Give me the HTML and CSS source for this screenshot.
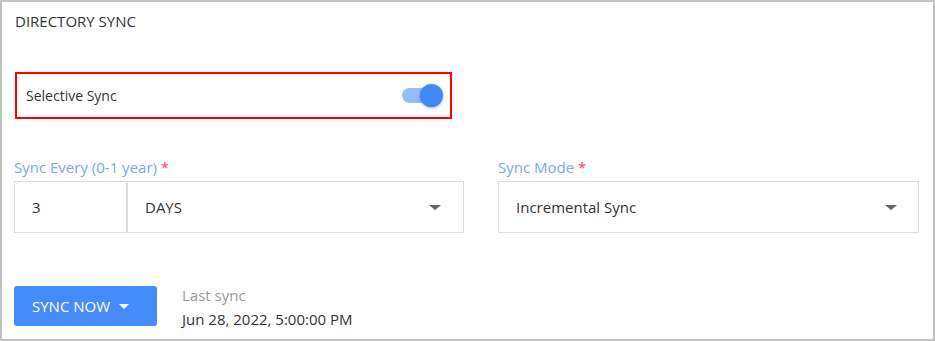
FILE: index.html
```html
<!DOCTYPE html>
<html lang="en">
<head>
    <meta charset="UTF-8" />
    <meta name="viewport" content="width=device-width, initial-scale=1.0" />
    <title>Directory Sync</title>
    <link rel="stylesheet" href="styles.css">
</head>
<body>
    <div class="panel">
        <h2 class="title">DIRECTORY SYNC</h2>

        <div class="selective">
            <span>Selective Sync</span>
            <span class="toggle"><span class="thumb"></span></span>
        </div>

        <div class="fields">
            <div class="field">
                <label>Sync Every (0-1 year) <span class="req">*</span></label>
                <div class="box">
                    <div class="num">3</div>
                    <div class="select">
                        <span>DAYS</span>
                        <span class="caret"></span>
                    </div>
                </div>
            </div>
            <div class="field">
                <label>Sync Mode <span class="req">*</span></label>
                <div class="box">
                    <div class="select wide">
                        <span>Incremental Sync</span>
                        <span class="caret"></span>
                    </div>
                </div>
            </div>
        </div>

        <div class="footer">
            <button class="sync-btn">SYNC NOW <span class="caret white"></span></button>
            <div class="last">
                <p class="last-label">Last sync</p>
                <p class="last-time">Jun 28, 2022, 5:00:00 PM</p>
            </div>
        </div>
    </div>
</body>
</html>
```

FILE: styles.css
```css
* {
    margin: 0;
    padding: 0;
    box-sizing: border-box;
}
body {
    font-family: 'Open Sans', 'Noto Sans', sans-serif;
    color: #333;
    background: #fff;
}

.panel {
    width: 935px;
    height: 341px;
    border: 2px solid #c2c2c2;
    padding: 9px 14px 0 12px;
}

.title {
    font-size: 15px;
    font-weight: normal;
    line-height: 20px;
    margin-left: 1px;
    color: #333;
}

.selective {
    margin: 41px 0 0 1px;
    width: 437px;
    height: 47px;
    border: 2px solid #f00;
    display: flex;
    align-items: center;
    justify-content: space-between;
    padding: 0 6px 0 9px;
    font-size: 14px;
}

.toggle {
    position: relative;
    width: 37px;
    height: 15px;
    border-radius: 8px;
    background: #93bcfa;
    margin-right: 5px;
}

.thumb {
    position: absolute;
    right: -4px;
    top: -4px;
    width: 23px;
    height: 23px;
    border-radius: 50%;
    background: #3f8bf6;
    box-shadow: 0 1px 3px rgba(0, 0, 0, 0.3);
}

.fields {
    display: grid;
    grid-template-columns: 450px 421px;
    gap: 34px;
    margin-top: 38px;
}

.field label {
    display: block;
    font-size: 15px;
    line-height: 20px;
    color: #7aa6f7;
    margin-bottom: 4px;
}

.req {
    color: #f44;
}

.box {
    display: flex;
    height: 52px;
    border: 1px solid #ddd;
    font-size: 15px;
}

.num {
    width: 113px;
    border-right: 2px solid #ddd;
    display: flex;
    align-items: center;
    padding-left: 17px;
}

.select {
    flex: 1;
    display: flex;
    align-items: center;
    justify-content: space-between;
    padding: 0 22px 0 17px;
}

.select.wide {
    padding: 0 21px 0 17px;
}

.caret {
    width: 0;
    height: 0;
    border-left: 6px solid transparent;
    border-right: 6px solid transparent;
    border-top: 5px solid #666;
}

.caret.white {
    border-top-color: #fff;
    border-left-width: 5px;
    border-right-width: 5px;
    margin-left: 9px;
}

.footer {
    display: flex;
    align-items: flex-start;
    margin-top: 53px;
    gap: 25px;
}

.sync-btn {
    width: 143px;
    height: 40px;
    border: none;
    border-radius: 3px;
    background: #448bfb;
    color: #fff;
    font-family: inherit;
    font-size: 15px;
    font-weight: 500;
    display: flex;
    align-items: center;
    padding-left: 18px;
}

.last-label {
    font-size: 15px;
    line-height: 20px;
    color: #999;
    margin-top: -1px;
}

.last-time {
    font-size: 15px;
    line-height: 20px;
    margin-top: 4px;
    color: #333;
}
```
